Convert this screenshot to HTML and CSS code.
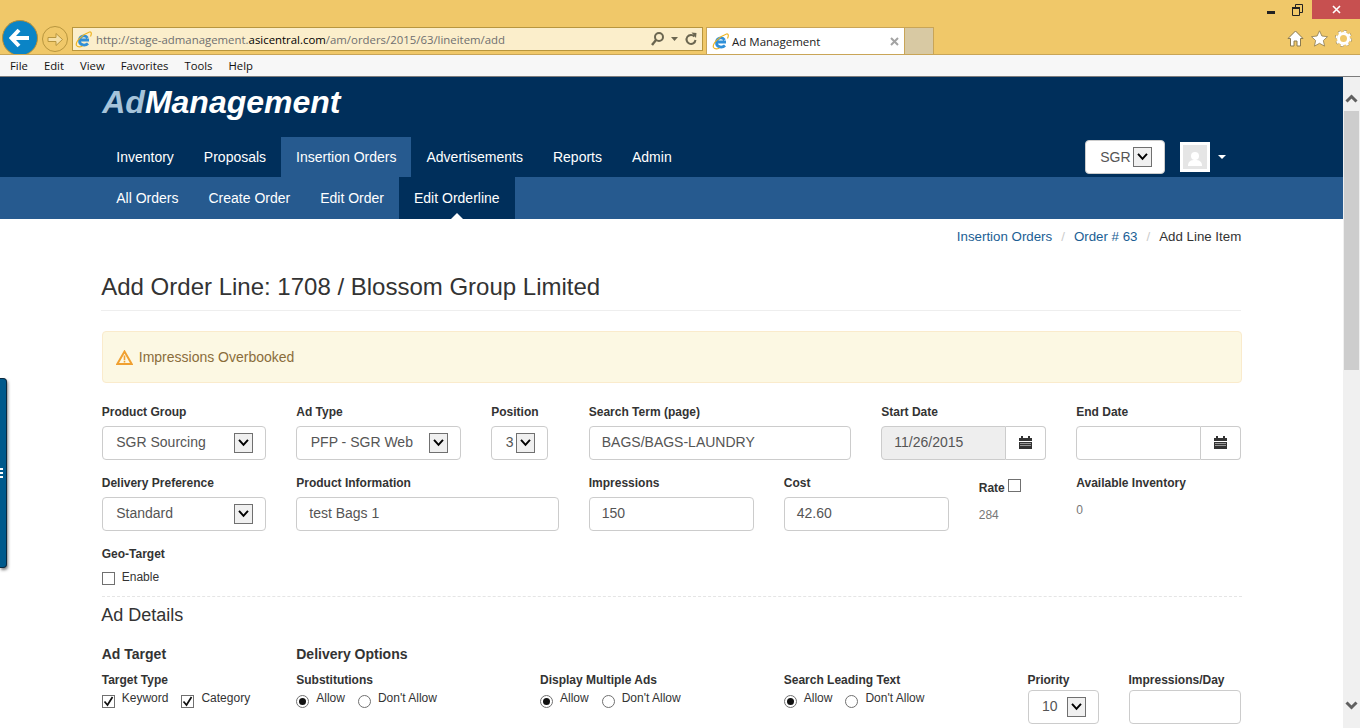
FILE: index.html
```html
<!DOCTYPE html>
<html lang="en">
<head>
    <meta charset="UTF-8">
    <meta name="viewport" content="width=device-width, initial-scale=1.0">
    <title>Ad Management</title>
    <link rel="stylesheet" href="styles.css">
</head>
<body>

    <!-- browser window chrome -->
    <div class="chrome">
        <div class="window-buttons">
            <span class="win-btn"><svg width="9" height="3"><rect width="8" height="3" fill="#222"/></svg></span>
            <span class="win-btn"><svg width="11" height="12" viewBox="0 0 11 12"><path d="M3.500 3V.5h7v8H8M.5 3.500h7v8h-7z" fill="none" stroke="#222"/><rect x="0" y="3" width="8" height="2" fill="#222"/></svg></span>
            <span class="win-close"><svg width="9" height="9" viewBox="0 0 9 9"><path d="M1 1l7 7M8 1L1 8" stroke="#fff" stroke-width="1.6"/></svg></span>
        </div>
        <div class="toolbar">
            <span class="back-btn">
                <svg width="22" height="20" viewBox="0 0 22 20"><path d="M10 2L2.500 10l7.500 8M3 10h17" fill="none" stroke="#fff" stroke-width="4"/></svg>
            </span>
            <span class="forward-btn">
                <svg width="17" height="15" viewBox="0 0 17 15"><path d="M1 5.500h8V1.500l6.500 6-6.500 6v-4H1z" fill="#f5dfa6" stroke="#b8963e"/></svg>
            </span>
            <div class="address-bar">
                <svg class="ie-icon" width="17" height="17" viewBox="0 0 17 17"><use href="#ie-logo"/></svg>
                <span class="url">http://stage-admanagement.<b>asicentral.com</b>/am/orders/2015/63/lineitem/add</span>
                <span class="address-tools">
                    <svg width="13" height="14" viewBox="0 0 13 14"><circle cx="8" cy="5" r="4" fill="none" stroke="#6b6650" stroke-width="2"/><path d="M5 8L1 13" stroke="#6b6650" stroke-width="2.400"/></svg>
                    <svg width="7" height="4" viewBox="0 0 7 4"><path d="M0 0h7L3.500 4z" fill="#6b6650"/></svg>
                    <svg width="12" height="14" viewBox="0 0 12 14"><path d="M9.500 4.500A4.500 4.500 0 1 0 10.500 8" fill="none" stroke="#6b6650" stroke-width="2"/><path d="M6.500 .5l5 .5-.5 5z" fill="#6b6650"/></svg>
                </span>
            </div>
            <div class="tab">
                <svg class="ie-icon" width="17" height="17" viewBox="0 0 17 17"><use href="#ie-logo"/></svg>
                <span class="tab-title">Ad Management</span>
                <svg class="tab-close" width="9" height="9" viewBox="0 0 9 9"><path d="M1 1l7 7M8 1L1 8" stroke="#a3a3a3" stroke-width="2"/></svg>
            </div>
            <div class="new-tab"></div>
            <div class="toolbar-icons">
                <svg width="17" height="17" viewBox="0 0 17 17"><path d="M8.500 1L1 8.500h2.500V16h3.500v-5h3v5h3.500V8.500H16z" fill="#fff" stroke="#8a7a50"/></svg>
                <svg width="17" height="17" viewBox="0 0 17 17"><path d="M8.500 .8l2.400 5.200 5.600.7-4.100 3.800 1.100 5.600-5-2.800-5 2.800 1.100-5.600L.5 6.700l5.600-.7z" fill="#fff" stroke="#8a7a50" stroke-width=".8"/></svg>
                <svg width="17" height="17" viewBox="0 0 17 17"><circle cx="8.500" cy="8.500" r="7" fill="none" stroke="#8a7a50" stroke-width="3" stroke-dasharray="2.700 2.800"/><circle cx="8.500" cy="8.500" r="5" fill="none" stroke="#fff" stroke-width="3"/><circle cx="8.500" cy="8.500" r="7" fill="none" stroke="#fff" stroke-width="2" stroke-dasharray="2.700 2.800"/></svg>
            </div>
        </div>
    </div>
    <div class="menubar">
        <span>File</span>
        <span>Edit</span>
        <span>View</span>
        <span>Favorites</span>
        <span>Tools</span>
        <span>Help</span>
    </div>

    <svg class="defs" width="0" height="0">
        <symbol id="ie-logo" viewBox="0 0 17 17">
            <path d="M14 9H4.500C4.800 4.500 10.500 3.500 12.500 7M4.500 10.500c.5 4 6 4.500 8.500 2" fill="none" stroke="#2f8fd8" stroke-width="2.800"/>
            <path d="M1.500 14.500C0 11 7 3.500 14.500 1c2.500-.5 2 2.500 1 4.500M1.500 14.500c1.500 2 4 1.500 6 .5" fill="none" stroke="#eeb422" stroke-width="1.200"/>
        </symbol>
        <symbol id="chevron" viewBox="0 0 19 20">
            <path d="M4.500 6.500L9.500 12l5-5.500" fill="none" stroke="#000" stroke-width="2.200"/>
        </symbol>
        <symbol id="calendar" viewBox="0 0 13 13">
            <path d="M0 2h2V0h2v2h5V0h2v2h2v3H0z" fill="#333"/>
            <path d="M0 6h13v7H0zM1 7.500h11v.6H1zM1 9.500h11v.6H1z" fill="#333" fill-rule="evenodd"/>
        </symbol>
        <symbol id="tick" viewBox="0 0 13 13">
            <path d="M2.500 6.500L5.500 10l5-8" fill="none" stroke="#111" stroke-width="1.700"/>
        </symbol>
    </svg>

    <div class="viewport">
        <div class="page">
            <div class="side-tab"><i></i><i></i><i></i></div>

            <div class="header">
                <div class="container">
                    <div class="logo"><span>Ad</span>Management</div>
                    <div class="main-nav">
                        <a>Inventory</a>
                        <a>Proposals</a>
                        <a class="active">Insertion Orders</a>
                        <a>Advertisements</a>
                        <a>Reports</a>
                        <a>Admin</a>
                        <div class="user-tools">
                            <div class="site-select">SGR<span class="arrow"><svg width="17" height="18"><use href="#chevron"/></svg></span></div>
                            <div class="avatar">
                                <svg width="24" height="24" viewBox="0 0 24 24"><circle cx="12" cy="11" r="4" fill="#fff"/><path d="M5 21c0-5 3-6 7-6s7 1 7 6z" fill="#fff"/></svg>
                            </div>
                            <span class="caret"></span>
                        </div>
                    </div>
                </div>
            </div>
            <div class="subheader">
                <div class="container sub-nav">
                    <a>All Orders</a>
                    <a>Create Order</a>
                    <a>Edit Order</a>
                    <a class="active">Edit Orderline</a>
                </div>
            </div>

            <div class="container">
                <div class="breadcrumb">
                    <a>Insertion Orders</a><em>/</em><a>Order # 63</a><em>/</em><span>Add Line Item</span>
                </div>

                <h1>Add Order Line: 1708 / Blossom Group Limited</h1>

                <div class="alert">
                    <svg width="17" height="15" viewBox="0 0 17 15"><path d="M8.500 1.500L1.300 14h14.400z" fill="none" stroke="#f0a030" stroke-width="2"/><path d="M8.500 5.500v4.500M8.500 10.800v1.700" stroke="#f0a030" stroke-width="1.600"/></svg>
                    Impressions Overbooked
                </div>

                <div class="row">
                    <div class="col-2 field">
                        <label>Product Group</label>
                        <div class="select">SGR Sourcing<span class="arrow"><svg width="17" height="18"><use href="#chevron"/></svg></span></div>
                    </div>
                    <div class="col-2 field">
                        <label>Ad Type</label>
                        <div class="select">PFP - SGR Web<span class="arrow"><svg width="17" height="18"><use href="#chevron"/></svg></span></div>
                    </div>
                    <div class="col-1 field">
                        <label>Position</label>
                        <div class="select select-tiny">3<span class="arrow"><svg width="17" height="18"><use href="#chevron"/></svg></span></div>
                    </div>
                    <div class="col-3 field">
                        <label>Search Term (page)</label>
                        <div class="input">BAGS/BAGS-LAUNDRY</div>
                    </div>
                    <div class="col-2 field">
                        <label>Start Date</label>
                        <div class="date-group">
                            <div class="input disabled">11/26/2015</div>
                            <span class="addon"><svg width="13" height="13"><use href="#calendar"/></svg></span>
                        </div>
                    </div>
                    <div class="col-2 field">
                        <label>End Date</label>
                        <div class="date-group">
                            <div class="input"></div>
                            <span class="addon"><svg width="13" height="13"><use href="#calendar"/></svg></span>
                        </div>
                    </div>
                </div>

                <div class="row">
                    <div class="col-2 field">
                        <label>Delivery Preference</label>
                        <div class="select">Standard<span class="arrow"><svg width="17" height="18"><use href="#chevron"/></svg></span></div>
                    </div>
                    <div class="col-3 field">
                        <label>Product Information</label>
                        <div class="input">test Bags 1</div>
                    </div>
                    <div class="col-2 field">
                        <label>Impressions</label>
                        <div class="input">150</div>
                    </div>
                    <div class="col-2 field">
                        <label>Cost</label>
                        <div class="input">42.60</div>
                    </div>
                    <div class="col-1 field">
                        <label class="rate-label">Rate <span class="check"></span></label>
                        <div class="static rate-value">284</div>
                    </div>
                    <div class="col-2 field">
                        <label>Available Inventory</label>
                        <div class="static">0</div>
                    </div>
                </div>

                <div class="geo">
                    <label>Geo-Target</label>
                    <div class="options"><span class="check"></span><span class="opt-text">Enable</span></div>
                </div>

                <h3>Ad Details</h3>

                <div class="row">
                    <div class="col-2">
                        <h4>Ad Target</h4>
                        <label class="tight">Target Type</label>
                        <div class="options">
                            <span class="check"><svg width="13" height="13"><use href="#tick"/></svg></span><span class="opt-text">Keyword</span>
                            <span class="check"><svg width="13" height="13"><use href="#tick"/></svg></span><span class="opt-text">Category</span>
                        </div>
                    </div>
                    <div class="col-10">
                        <h4>Delivery Options</h4>
                        <div class="row">
                            <div class="col-3-nested">
                                <label class="tight">Substitutions</label>
                                <div class="options">
                                    <span class="radio on"></span><span class="opt-text">Allow</span>
                                    <span class="radio"></span><span class="opt-text">Don't Allow</span>
                                </div>
                            </div>
                            <div class="col-3-nested">
                                <label class="tight">Display Multiple Ads</label>
                                <div class="options">
                                    <span class="radio on"></span><span class="opt-text">Allow</span>
                                    <span class="radio"></span><span class="opt-text">Don't Allow</span>
                                </div>
                            </div>
                            <div class="col-3-nested">
                                <label class="tight">Search Leading Text</label>
                                <div class="options">
                                    <span class="radio on"></span><span class="opt-text">Allow</span>
                                    <span class="radio"></span><span class="opt-text">Don't Allow</span>
                                </div>
                            </div>
                            <div class="col-3-nested priority-cols">
                                <div class="priority">
                                    <label class="tight">Priority</label>
                                    <div class="select">10<span class="arrow"><svg width="17" height="18"><use href="#chevron"/></svg></span></div>
                                </div>
                                <div class="per-day">
                                    <label class="tight">Impressions/Day</label>
                                    <div class="input"></div>
                                </div>
                            </div>
                        </div>
                    </div>
                </div>
            </div>
        </div>

        <div class="scrollbar">
            <svg class="scroll-arrow" width="13" height="9" viewBox="0 0 13 9"><path d="M1.500 7.500l5-5 5 5" fill="none" stroke="#606060" stroke-width="3"/></svg>
            <div class="scroll-thumb"></div>
            <svg class="scroll-arrow" width="13" height="9" viewBox="0 0 13 9"><path d="M1.500 1.500l5 5 5-5" fill="none" stroke="#606060" stroke-width="3"/></svg>
        </div>
    </div>

</body>
</html>
```

FILE: styles.css
```css
* {
    box-sizing: border-box;
}

html, body {
    height: 100%;
    margin: 0;
    overflow: hidden;
}

body {
    font-family: 'Liberation Sans', Arial, sans-serif;
    font-size: 14px;
    color: #333;
    display: flex;
    flex-direction: column;
}

.defs {
    position: absolute;
}

/* Browser chrome */
.chrome {
    height: 55px;
    flex: none;
    background: #f0c869;
    border-bottom: 1px solid #c9a557;
    position: relative;
    overflow: hidden;
}

.window-buttons {
    display: flex;
    justify-content: flex-end;
    align-items: flex-start;
    height: 19px;
}

.win-btn {
    width: 26px;
    height: 19px;
    display: flex;
    align-items: center;
    justify-content: center;
}

.win-btn:first-child svg {
    margin-top: 5px;
}

.win-close {
    width: 48px;
    height: 19px;
    margin-left: 2px;
    background: #c75050;
    display: flex;
    align-items: center;
    justify-content: center;
}

.toolbar {
    display: flex;
    align-items: flex-start;
    padding-top: 8px;
    padding-left: 72px;
}

.back-btn {
    position: absolute;
    left: 2px;
    top: 20px;
    width: 36px;
    height: 36px;
    border-radius: 50%;
    background: #0a84c6;
    border: 1px solid #b98f35;
    display: flex;
    align-items: center;
    justify-content: center;
}

.forward-btn {
    position: absolute;
    left: 42px;
    top: 26px;
    width: 26px;
    height: 26px;
    border-radius: 50%;
    border: 1px solid #b8963e;
    display: flex;
    align-items: center;
    justify-content: center;
}

.address-bar {
    width: 631px;
    height: 24px;
    background: #fbeecb;
    border: 1px solid #b8963e;
    display: flex;
    align-items: center;
    padding-left: 2px;
}

.url {
    margin-left: 4px;
    font-family: 'Open Sans', sans-serif;
    font-size: 11.4px;
    color: #6f6f6f;
    white-space: nowrap;
}

.url b {
    font-weight: normal;
    color: #000;
}

.address-tools {
    margin-left: auto;
    display: flex;
    align-items: center;
    gap: 7px;
    padding-right: 5px;
}

.tab {
    width: 199px;
    height: 27px;
    margin-left: 3px;
    background: #fff;
    border: 1px solid #c9a557;
    border-bottom: 0;
    display: flex;
    align-items: center;
    padding-left: 5px;
}

.tab-title {
    margin-left: 3px;
    font-family: 'Open Sans', sans-serif;
    font-size: 11.5px;
    color: #222;
}

.tab-close {
    margin-left: auto;
    margin-right: 5px;
}

.new-tab {
    width: 29px;
    height: 27px;
    background: #d8c9a3;
    border: 1px solid #c9a557;
    border-left: 0;
    border-bottom: 0;
}

.toolbar-icons {
    margin-left: auto;
    margin-top: 3px;
    padding-right: 8px;
    display: flex;
    gap: 7px;
}

.menubar {
    height: 22px;
    flex: none;
    background: #f7f7f7;
    border-bottom: 1px solid #7c7c7c;
    display: flex;
    align-items: center;
    gap: 16px;
    padding-left: 10px;
    font-family: 'Open Sans', sans-serif;
    font-size: 11.3px;
    color: #111;
}

.viewport {
    flex: 1;
    min-height: 0;
    display: flex;
}

.page {
    flex: 1;
    min-width: 0;
    overflow: hidden;
    position: relative;
    padding-right: 0.5px;
}

.scrollbar {
    width: 17px;
    flex: none;
    background: #f0f0f0;
    display: flex;
    flex-direction: column;
    align-items: center;
    padding-top: 17px;
    padding-bottom: 18px;
}

.scroll-thumb {
    width: 15px;
    height: 259px;
    margin-top: 8px;
    margin-bottom: auto;
    background: #cdcdcd;
}

.side-tab {
    position: absolute;
    left: 0;
    top: 301px;
    width: 7px;
    height: 190px;
    background: #005a8c;
    border: 1px solid #0a2a40;
    border-left: 0;
    border-radius: 0 4px 4px 0;
    box-shadow: 1px 2px 3px rgba(0, 0, 0, 0.5);
    display: flex;
    flex-direction: column;
    justify-content: center;
    gap: 2px;
}

.side-tab i {
    display: block;
    width: 3px;
    height: 2px;
    background: #fff;
}

/* Site header */
.container {
    width: 1170px;
    margin: 0 auto;
    padding: 0 15px;
}

.header {
    height: 100px;
    background: #002f5b;
}

.logo {
    height: 60px;
    padding-top: 5px;
    padding-left: 1px;
    font-size: 32px;
    line-height: 40px;
    font-weight: bold;
    font-style: italic;
    color: #fff;
}

.logo span {
    color: #a5c3da;
}

.main-nav {
    height: 40px;
    display: flex;
    color: #fff;
}

.main-nav a {
    padding: 0 15px;
    line-height: 40px;
}

.main-nav a.active {
    background: #265a8f;
}

.user-tools {
    margin-left: auto;
    display: flex;
    align-items: flex-start;
    padding-right: 15px;
}

.site-select {
    width: 80px;
    height: 34px;
    margin-top: 3px;
    background: #fff;
    border: 1px solid #ccc;
    border-radius: 4px;
    color: #555;
    line-height: 32px;
    padding-left: 14px;
    position: relative;
}

.arrow {
    position: absolute;
    top: 6px;
    right: 12px;
    width: 19px;
    height: 20px;
    background: #f0f0f0;
    border: 1px solid #707070;
    display: block;
}

.arrow svg {
    display: block;
}

.avatar {
    width: 30px;
    height: 30px;
    margin-top: 5px;
    margin-left: 15px;
    background: #e5e5e5;
    border: 3px solid #fff;
}

.avatar svg {
    display: block;
}

.caret {
    margin-top: 18px;
    margin-left: 8px;
    border-top: 4px solid #fff;
    border-left: 4px solid transparent;
    border-right: 4px solid transparent;
}

.subheader {
    height: 42px;
    background: #265a8f;
}

.sub-nav {
    display: flex;
    color: #fff;
}

.sub-nav a {
    padding: 0 15px;
    line-height: 42px;
    position: relative;
}

.sub-nav a.active {
    background: #002f5b;
}

.sub-nav a.active::after {
    content: "";
    position: absolute;
    left: 50%;
    bottom: 0;
    margin-left: -6px;
    border-bottom: 6px solid #fff;
    border-left: 6px solid transparent;
    border-right: 6px solid transparent;
}

/* Page body */
.breadcrumb {
    display: flex;
    justify-content: flex-end;
    padding-top: 9px;
    font-size: 13.3px;
    line-height: 18px;
}

.breadcrumb a {
    color: #1b5e94;
}

.breadcrumb em {
    font-style: normal;
    color: #ccc;
    padding: 0 9px;
}

h1 {
    margin: 28px 0 20px;
    padding-bottom: 10px;
    border-bottom: 1px solid #eee;
    font-size: 24px;
    line-height: 26px;
    font-weight: normal;
    color: #333;
}

.alert {
    height: 52px;
    margin: 0 -0.5px 21px 0.5px;
    padding: 0 13px;
    background: #fcf8e3;
    border: 1px solid #faebcc;
    border-radius: 4px;
    color: #8a6d3b;
    line-height: 50px;
    display: flex;
    align-items: center;
    gap: 6px;
}

.row {
    display: flex;
    margin: 0 -15px;
}

.col-1, .col-2, .col-3, .col-10, .col-3-nested {
    padding: 0 15px;
    flex: none;
}

.col-1 { width: 97.5px; }
.col-2 { width: 195px; }
.col-3 { width: 292.5px; }
.col-10 { width: 975px; }
.col-3-nested { width: 243.75px; }

/* first column sits half a pixel in, like the edge of the alert above */
.row > .col-2:first-child {
    padding-left: 15.5px;
}

.field {
    margin-bottom: 15px;
}

label {
    display: block;
    margin-bottom: 5px;
    font-size: 12px;
    line-height: 17px;
    font-weight: bold;
}

label.tight {
    margin-bottom: 1px;
}

.input, .select {
    height: 34px;
    border: 1px solid #ccc;
    border-radius: 4px;
    background: #fff;
    color: #555;
    line-height: 30px;
    position: relative;
}

.input {
    padding: 0 12px;
}

.select {
    padding-left: 13.5px;
}

.select-tiny {
    width: 57px;
}

.date-group {
    display: flex;
}

.date-group .input {
    flex: 1;
    min-width: 0;
    border-radius: 4px 0 0 4px;
}

.input.disabled {
    background: #eee;
}

.addon {
    width: 40px;
    height: 34px;
    flex: none;
    border: 1px solid #ccc;
    border-left: 0;
    border-radius: 0 4px 4px 0;
    padding-bottom: 2px;
    display: flex;
    align-items: center;
    justify-content: center;
}

.rate-label {
    display: flex;
    gap: 3px;
    height: 17px;
    margin-top: 5px;
    margin-bottom: 10px;
}

.rate-label .check {
    margin-top: -1px;
    margin-right: 0;
}

.static {
    font-size: 12px;
    line-height: 17px;
    color: #777;
    margin-top: 10px;
}

.rate-value {
    margin-top: 0;
}

.check {
    width: 13px;
    height: 13px;
    flex: none;
    background: #fff;
    border: 1px solid #707070;
    display: block;
    margin-top: 5px;
    position: relative;
}

.check svg {
    position: absolute;
    left: -1px;
    top: -1px;
}

.radio {
    width: 13px;
    height: 13px;
    flex: none;
    background: #fff;
    border: 1px solid #707070;
    border-radius: 50%;
    display: block;
    margin-top: 5px;
    position: relative;
}

.radio.on::after {
    content: "";
    position: absolute;
    left: 2px;
    top: 2px;
    width: 7px;
    height: 7px;
    border-radius: 50%;
    background: #111;
}

.options {
    display: flex;
    font-size: 12px;
    line-height: 17px;
    color: #333;
}

.opt-text {
    margin-left: 7px;
    margin-right: 13px;
}

.geo {
    height: 51px;
    margin: 0 -0.5px 0 0.5px;
    border-bottom: 1px dashed #e5e5e5;
}

.geo label {
    margin-bottom: 6px;
}

.geo .check {
    margin-top: 3px;
}

h3 {
    margin: 8px 0 19px;
    font-size: 18px;
    line-height: 20px;
    font-weight: normal;
}

h4 {
    margin: 0 0 8px;
    font-size: 14px;
    line-height: 20px;
    font-weight: bold;
}

.priority-cols {
    display: flex;
    gap: 30px;
}

.priority {
    width: 71px;
    flex: none;
}

.per-day {
    flex: 1;
}
```
